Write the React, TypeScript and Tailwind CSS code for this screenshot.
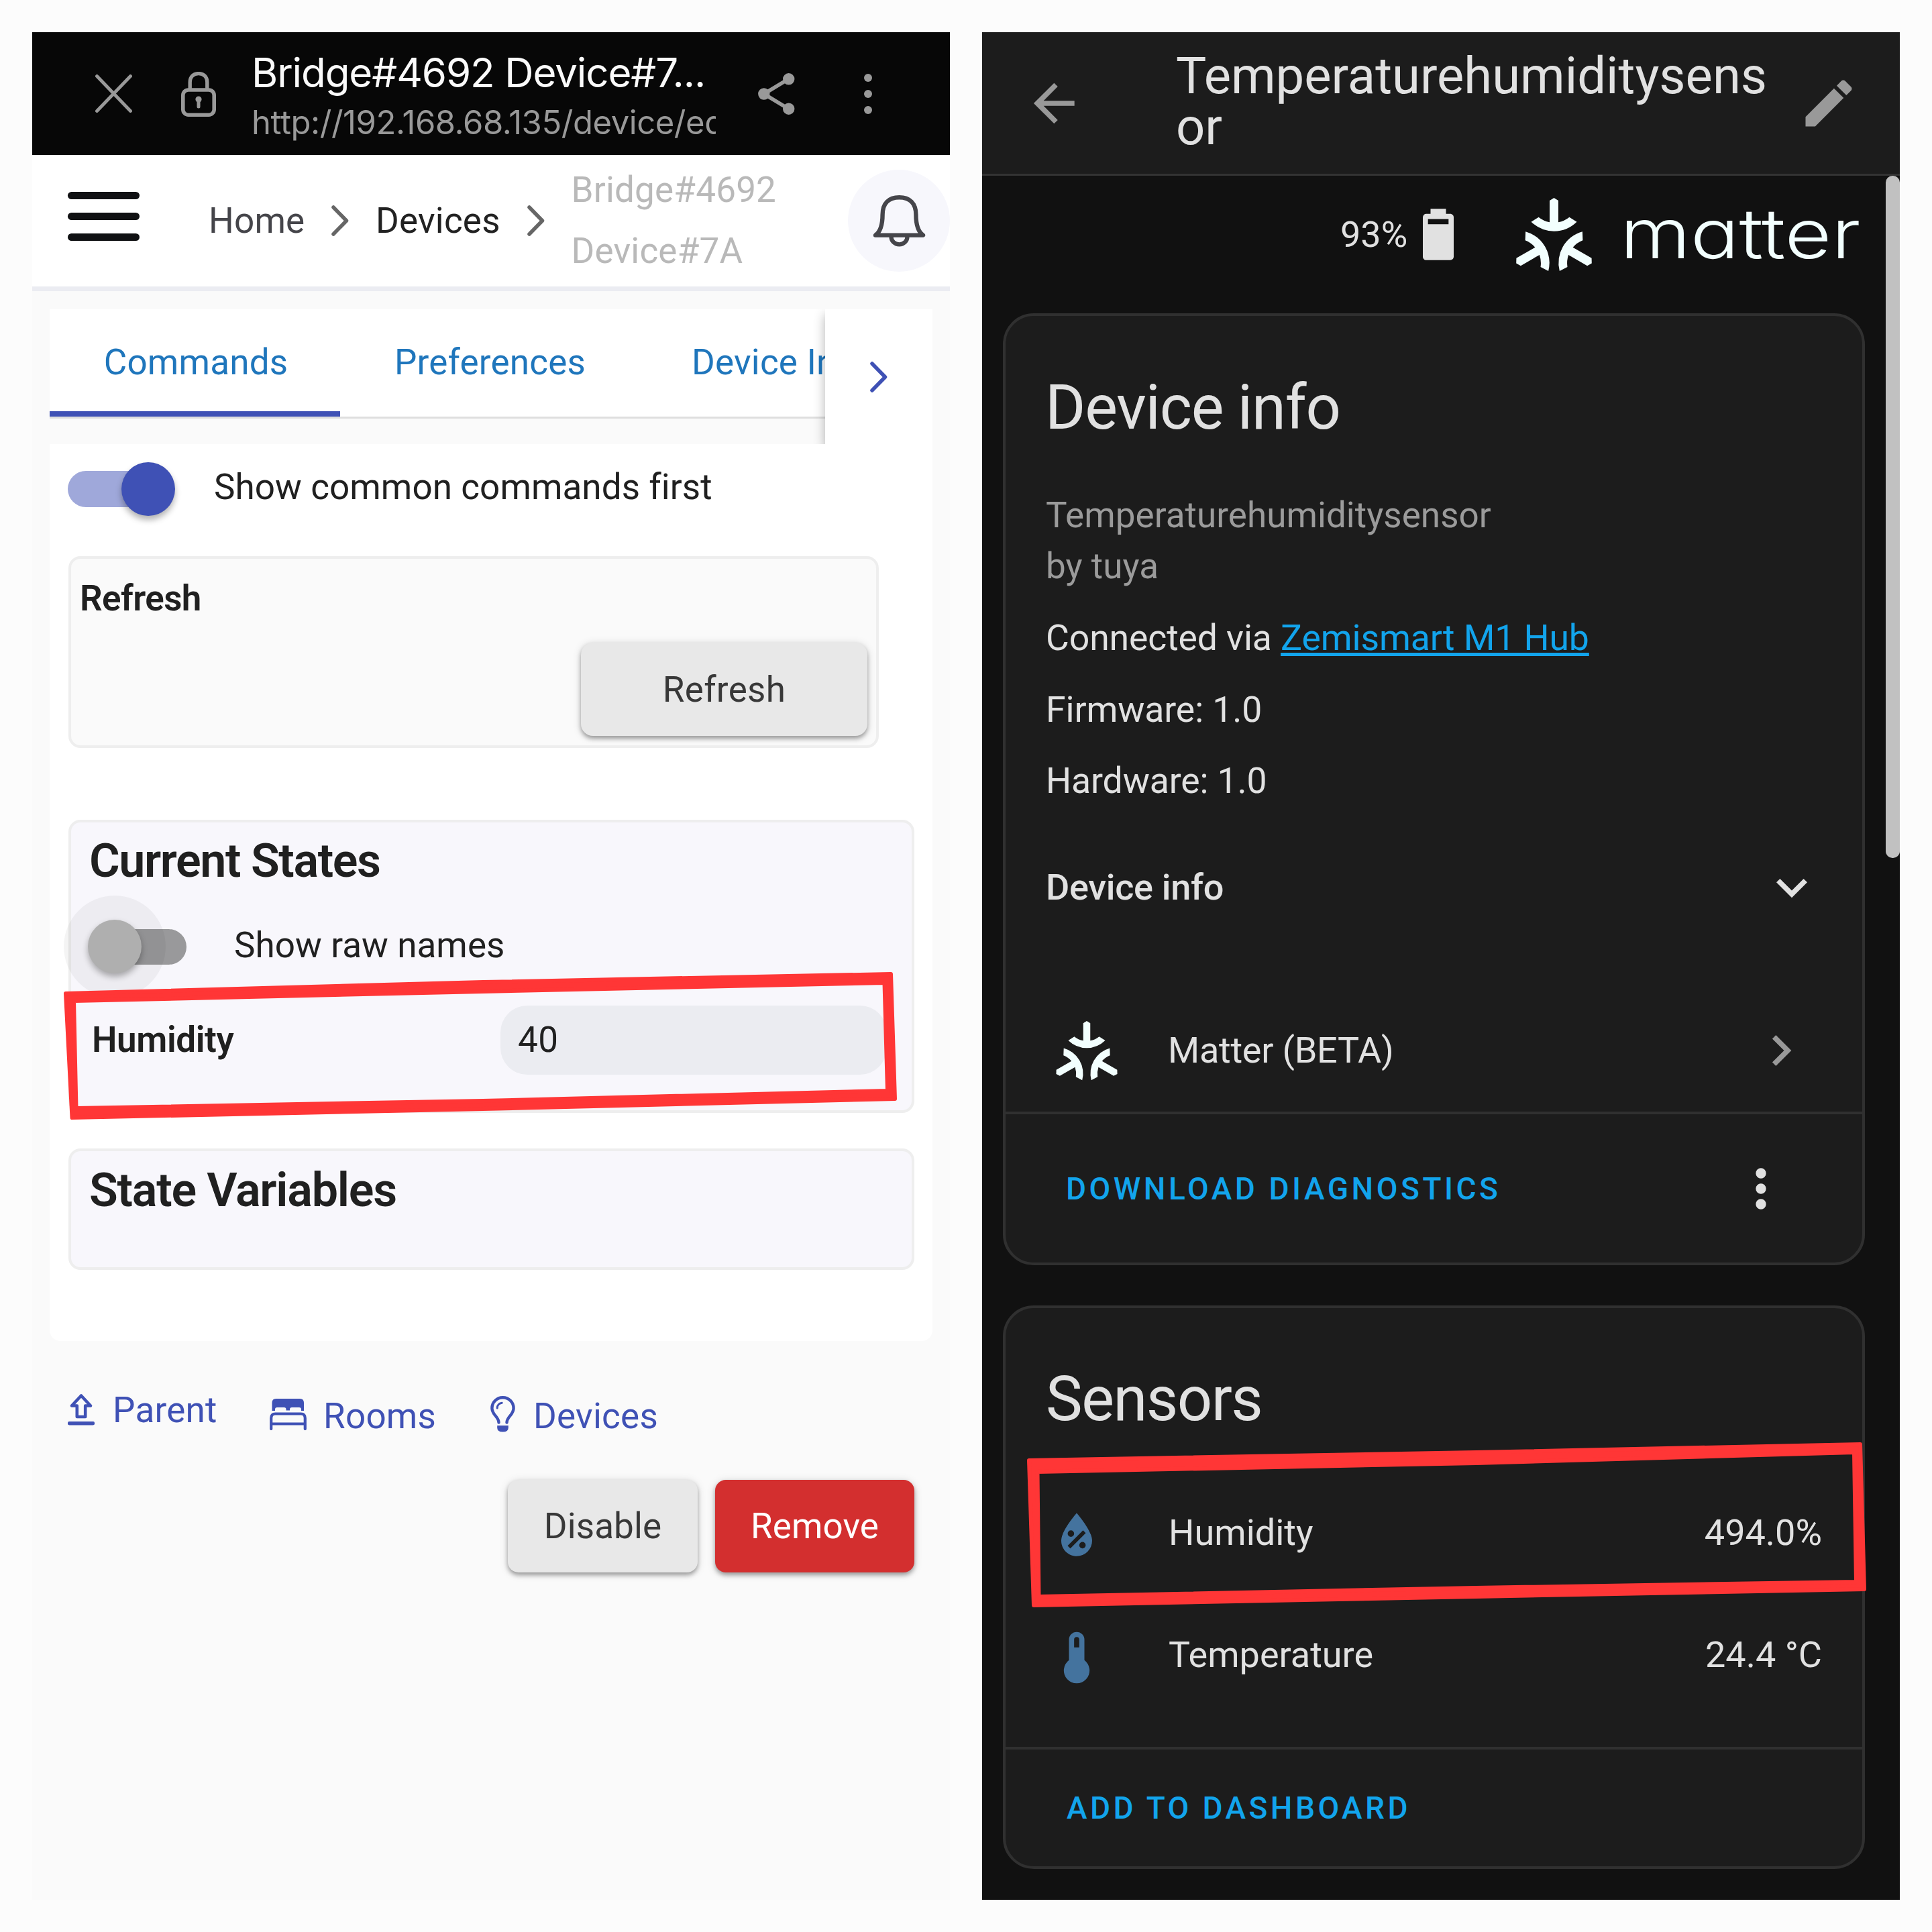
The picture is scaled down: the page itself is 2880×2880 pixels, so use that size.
import React from "react";

/* ---------- icons ---------- */

type MdiProps = { d: string; className?: string; viewBox?: string };

function Mdi({ d, className = "", viewBox = "0 0 24 24" }: MdiProps) {
  return (
    <svg viewBox={viewBox} className={`shrink-0 fill-current ${className}`}>
      <path d={d} />
    </svg>
  );
}

const ARROW_LEFT = "M20,11V13H8L13.5,18.5L12.08,19.92L4.16,12L12.08,4.08L13.5,5.5L8,11H20Z";
const PENCIL =
  "M20.71,7.04C21.1,6.65 21.1,6 20.71,5.63L18.37,3.29C18,2.9 17.35,2.9 16.96,3.29L15.12,5.12L18.87,8.87M3,17.25V21H6.75L17.81,9.93L14.06,6.18L3,17.25Z";
const BATTERY_90 =
  "M16,8H8V6H16M16.67,4H15V2H9V4H7.33A1.33,1.33 0 0,0 6,5.33V20.67C6,21.4 6.6,22 7.33,22H16.67A1.33,1.33 0 0,0 18,20.67V5.33C18,4.6 17.4,4 16.67,4Z";
const CHEVRON_DOWN = "M7.41,8.58L12,13.17L16.59,8.58L18,10L12,16L6,10L7.41,8.58Z";
const CHEVRON_RIGHT = "M8.59,16.58L13.17,12L8.59,7.41L10,6L16,12L10,18L8.59,16.58Z";
const DOTS_VERTICAL =
  "M12,16A2,2 0 0,1 14,18A2,2 0 0,1 12,20A2,2 0 0,1 10,18A2,2 0 0,1 12,16M12,10A2,2 0 0,1 14,12A2,2 0 0,1 12,14A2,2 0 0,1 10,12A2,2 0 0,1 12,10M12,4A2,2 0 0,1 14,6A2,2 0 0,1 12,8A2,2 0 0,1 10,6A2,2 0 0,1 12,4Z";
const WATER_PERCENT =
  "M12,3.25C12,3.25 6,10 6,14C6,17.32 8.69,20 12,20A6,6 0 0,0 18,14C18,10 12,3.25 12,3.25M14.47,9.97L15.53,11.03L9.53,17.03L8.47,15.97M9.75,10A1.25,1.25 0 0,1 11,11.25A1.25,1.25 0 0,1 9.75,12.5A1.25,1.25 0 0,1 8.5,11.25A1.25,1.25 0 0,1 9.75,10M14.25,14.5A1.25,1.25 0 0,1 15.5,15.75A1.25,1.25 0 0,1 14.25,17A1.25,1.25 0 0,1 13,15.75A1.25,1.25 0 0,1 14.25,14.5Z";
const THERMOMETER =
  "M15 13V5A3 3 0 0 0 9 5V13A5 5 0 1 0 15 13M12 4A1 1 0 0 1 13 5V8H11V5A1 1 0 0 1 12 4Z";

function MatterMark({ className = "" }: { className?: string }) {
  const arm =
    "M49.8 4 L56.3 0 L62.8 4 V36.3 Q72 34.5 79.2 28.7 L90.3 35.7 Q76 49.5 56.3 49.7 Q36.6 49.5 22.3 35.7 L33.4 28.7 Q40.6 34.5 49.8 36.3 Z";
  return (
    <svg viewBox="0 0 112.6 110" className={`shrink-0 fill-[#f2fffe] ${className}`}>
      <path d={arm} />
      <path d={arm} transform="rotate(120 56.3 65)" />
      <path d={arm} transform="rotate(240 56.3 65)" />
    </svg>
  );
}

function ThinChevron({ className = "" }: { className?: string }) {
  return (
    <svg viewBox="0 0 26 46" fill="none" className={`shrink-0 stroke-current ${className}`}>
      <path d="M3 3 L22.5 23 L3 43" strokeWidth="5.5" strokeLinecap="round" strokeLinejoin="round" />
    </svg>
  );
}

/* ---------- left phone ---------- */

function BrowserBar() {
  return (
    <div className="flex h-[183px] items-start bg-[#070707] pl-[94px]">
      <svg viewBox="0 0 55 57" fill="none" className="mt-[63px] h-[57px] w-[55px] shrink-0 stroke-[#999]">
        <path d="M2.5 2.5 L52.5 54.5 M52.5 2.5 L2.5 54.5" strokeWidth="4.8" strokeLinecap="round" />
      </svg>
      <svg viewBox="0 0 52 67" fill="none" className="mt-[59px] ml-[73px] h-[67px] w-[52px] shrink-0 stroke-[#999]">
        <path d="M13.2 26 V15.5 C13.2 7.5 18.5 2.6 26 2.6 C33.5 2.6 38.8 7.5 38.8 15.5 V26" strokeWidth="5.4" />
        <rect x="2.8" y="27" width="46.4" height="37.2" rx="8" strokeWidth="5.6" />
        <circle cx="26" cy="41" r="4.6" className="fill-[#999]" stroke="none" />
        <path d="M26 41 V52" strokeWidth="5" strokeLinecap="round" />
      </svg>
      <div className="mt-[25px] ml-[53px] w-[692px] overflow-hidden font-['Inter',sans-serif] whitespace-nowrap">
        <div className="text-[60px] leading-[70px] tracking-[-1.1px] text-[#fafafa]">Bridge#4692 Device#7...</div>
        <div className="mt-[10px] text-[49px] leading-[60px] tracking-[-0.45px] text-[#999]">
          http://192.168.68.135/device/edit
        </div>
      </div>
      <svg viewBox="0 0 55 62" className="mt-[61px] ml-[63px] h-[62px] w-[55px] shrink-0 fill-[#999] stroke-[#999]">
        <path d="M45.7 8.7 L8.7 31 L45.7 53.3" fill="none" strokeWidth="5.6" />
        <circle cx="45.7" cy="8.8" r="8.7" stroke="none" />
        <circle cx="8.8" cy="31" r="8.7" stroke="none" />
        <circle cx="45.7" cy="53.2" r="8.7" stroke="none" />
      </svg>
      <div className="mt-[62px] ml-[103px] flex flex-col gap-[12px]">
        <div className="size-[12px] rounded-full bg-[#999]" />
        <div className="size-[12px] rounded-full bg-[#999]" />
        <div className="size-[12px] rounded-full bg-[#999]" />
      </div>
    </div>
  );
}

function BreadcrumbHeader() {
  return (
    <div className="flex h-[203px] items-center border-b-[7px] border-[#ebecf2] bg-white pl-[53px] text-[53px] leading-[91px] tracking-[0.2px]">
      <div className="mb-[13px] flex w-[107px] flex-col gap-[20px]">
        <div className="h-[11px] rounded-full bg-[#101113]" />
        <div className="h-[11px] rounded-full bg-[#101113]" />
        <div className="h-[11px] rounded-full bg-[#101113]" />
      </div>
      <div className="ml-[103px] w-[146px] text-[#45454a]">Home</div>
      <ThinChevron className="ml-[37px] h-[46px] w-[26px] text-[#666]" />
      <div className="ml-[40px] w-[186px] text-[#222]">Devices</div>
      <ThinChevron className="ml-[40px] h-[46px] w-[26px] text-[#666]" />
      <div className="ml-[39.5px] w-[310px] text-[#b9b9b9]">
        Bridge#4692
        <br />
        Device#7A
      </div>
      <div className="ml-[102.5px] flex size-[152px] items-center justify-center rounded-full bg-[#f7f7fc]">
        <svg viewBox="0 0 79 77" fill="none" className="h-[77px] w-[79px] stroke-[#45454a]">
          <path
            d="M4 59.6 C12.5 53.5 14.6 42 14.6 29 C14.6 12 24 3.3 39.5 3.3 C55 3.3 64.4 12 64.4 29 C64.4 42 66.5 53.5 75 59.6 Z"
            strokeWidth="6.4"
            strokeLinejoin="round"
          />
          <path d="M27.5 62 A12 11.4 0 0 0 51.5 62" strokeWidth="6.2" />
        </svg>
      </div>
    </div>
  );
}

function TabBar() {
  return (
    <div className="mx-[26px] mt-[27px] flex h-[201px]">
      <div className="w-[1156px] overflow-hidden">
        <div className="flex h-[163px] items-stretch border-b-[3px] border-[#dedede] bg-white text-[53px] tracking-[0.2px] whitespace-nowrap text-[#1f76bc]">
          <div className="flex w-[433px] shrink-0 items-center justify-center border-b-[8px] border-[#3f51b5] pt-[8px] pl-[3px]">
            Commands
          </div>
          <div className="flex w-[447px] shrink-0 items-center justify-center">Preferences</div>
          <div className="flex shrink-0 items-center pl-[77px]">Device Info</div>
        </div>
      </div>
      <div className="relative flex w-[160px] items-center justify-center bg-white text-[#3f51b5] shadow-[0_8px_16px_rgba(0,0,0,0.3)] [clip-path:inset(0_0_0_-24px)]">
        <ThinChevron className="h-[46px] w-[26px]" />
      </div>
    </div>
  );
}

function CommandsCard() {
  return (
    <div className="relative mx-[26px] flex h-[1337px] flex-col rounded-b-[16px] bg-white px-[28px] text-[#202020]">
      <div className="flex h-[133px] items-center">
        <div className="relative -ml-px flex h-[54px] w-[139px] items-center rounded-full bg-[#9fa8da]">
          <div className="absolute -right-[21px] size-[80px] rounded-full bg-[#3f51b5] shadow-[0_6px_10px_rgba(0,0,0,0.3)]" />
        </div>
        <div className="mb-[3px] ml-[79px] text-[53px] tracking-[0.07px]">Show common commands first</div>
      </div>

      <div className="mt-[34px] flex h-[286px] w-[1208px] flex-col rounded-[18px] border-[4px] border-[#eee] bg-[#fafafa]">
        <div className="mt-[29px] ml-[13px] text-[53px] leading-[60px] font-semibold tracking-[-0.6px]">Refresh</div>
        <button className="mt-[36px] mr-[13px] flex h-[139px] w-[427px] items-center justify-center self-end rounded-[18px] bg-[#e8e8e8] pt-[2px] text-[53px] tracking-[0.3px] text-[#383838] shadow-[0_4px_6px_rgba(0,0,0,0.32),0_2px_14px_rgba(0,0,0,0.14)]">
          Refresh
        </button>
      </div>

      <div className="mt-[107px] flex h-[437px] w-[1261px] flex-col rounded-[18px] border-[4px] border-[#eee] bg-[#f8f7fc] pl-[28px]">
        <div className="mt-[15px] -ml-px text-[70px] leading-[84px] font-semibold tracking-[-1.4px]">Current States</div>
        <div className="mt-[26px] flex h-[120px] items-center">
          <div className="relative ml-[4px] flex h-[53px] w-[140px] items-center rounded-full bg-[#99999b]">
            <div className="absolute -left-[43px] size-[152px] rounded-full bg-black/[0.045]" />
            <div className="absolute -left-[7px] size-[80px] rounded-full bg-[#afafaf] shadow-[0_5px_10px_rgba(0,0,0,0.3)]" />
          </div>
          <div className="mb-[3px] ml-[71px] text-[53px] tracking-[0.06px]">Show raw names</div>
        </div>
        <div className="mt-[28px] flex h-[103px] items-center">
          <div className="w-[612px] pl-[3px] text-[53px] font-semibold tracking-[-0.4px]">Humidity</div>
          <div className="flex h-[103px] w-[576px] items-center rounded-[40px] bg-[#ebecf1] pl-[26px] text-[53px] tracking-[0.5px]">
            40
          </div>
        </div>
      </div>

      <div className="mt-[53px] h-[181px] w-[1261px] rounded-[18px] border-[4px] border-[#eee] bg-[#f8f7fc] pt-[16px] pl-[27px] text-[70px] leading-[84px] font-semibold tracking-[-1.2px]">
        State Variables
      </div>
    </div>
  );
}

function FooterLinks() {
  return (
    <div className="mt-[66px] flex items-start pl-[53px] text-[53px] leading-[72px] tracking-[0.25px] text-[#3f51b5]">
      <div className="flex h-[72px] items-center">
        <svg viewBox="0 0 40 48" fill="none" className="h-[48px] w-[40px] stroke-current">
          <path d="M20 3.5 L34 18.5 H26.2 V35 H13.8 V18.5 H6 Z" strokeWidth="4.6" strokeLinejoin="round" />
          <path d="M2.5 44.8 H37.5" strokeWidth="5.4" strokeLinecap="round" />
        </svg>
        <div className="mt-[2px] ml-[27px] w-[157px]">Parent</div>
      </div>
      <div className="mt-[9px] ml-[77px] flex h-[72px] items-center">
        <svg viewBox="0 0 55 47" className="mb-[3px] h-[47px] w-[55px] fill-current stroke-current">
          <path
            stroke="none"
            d="M3.5 18 V6 Q3.5 0 9.5 0 H45 Q51 0 51 6 V18 H47 V16 Q47 13 44 13 H33 Q30 13 30 16 V17.5 H24.5 V16 Q24.5 13 21.5 13 H11 Q8 13 8 16 V18 Z"
          />
          <path
            fill="none"
            strokeWidth="4.2"
            strokeLinecap="round"
            strokeLinejoin="round"
            d="M2.2 45 V29 Q2.2 22.5 8.5 22.5 H46.5 Q52.8 22.5 52.8 29 V45 M2.2 37.5 H52.8"
          />
        </svg>
        <div className="mt-[2px] ml-[25px] w-[170px]">Rooms</div>
      </div>
      <div className="mt-[9px] ml-[79px] flex h-[72px] items-center">
        <svg viewBox="0 0 37 54" fill="none" className="mb-[4px] h-[54px] w-[37px] stroke-current">
          <path
            d="M12.5 39.5 C12.5 31 2.4 28 2.4 18.2 C2.4 9 9.6 2.3 18.5 2.3 C27.4 2.3 34.6 9 34.6 18.2 C34.6 28 24.5 31 24.5 39.5"
            strokeWidth="4.4"
            strokeLinecap="round"
          />
          <path d="M10.2 18 C10.2 13.8 13 10.8 17.2 10.2" strokeWidth="3" strokeLinecap="round" />
          <path d="M10.2 44 H26.8 V47.5 Q26.8 53.6 18.5 53.6 Q10.2 53.6 10.2 47.5 Z" stroke="none" className="fill-current" />
        </svg>
        <div className="mt-[2px] ml-[27px]">Devices</div>
      </div>
    </div>
  );
}

function LeftPhone() {
  return (
    <section className="flex h-[2784px] w-[1368px] flex-col overflow-hidden bg-[#fafafa]">
      <BrowserBar />
      <BreadcrumbHeader />
      <TabBar />
      <CommandsCard />
      <FooterLinks />
      <div className="mt-[60px] flex h-[138px] justify-end gap-[26px] pr-[53px] text-[53px] tracking-[0.1px]">
        <button className="w-[283px] rounded-[16px] bg-[#e8e8e8] pt-[2px] text-[#383838] shadow-[0_4px_6px_rgba(0,0,0,0.32),0_2px_14px_rgba(0,0,0,0.14)]">
          Disable
        </button>
        <button className="w-[297px] rounded-[16px] bg-[#d32f2f] pt-[2px] text-white shadow-[0_4px_6px_rgba(0,0,0,0.32),0_2px_14px_rgba(0,0,0,0.14)]">
          Remove
        </button>
      </div>
    </section>
  );
}

/* ---------- right phone ---------- */

function SensorRow({ icon, name, value }: { icon: string; name: string; value: string }) {
  return (
    <div className="flex h-[182px] items-center pr-[60px] pl-[60px] text-[54px] text-[#e1e1e1]">
      <Mdi d={icon} className="mt-[9px] size-[92px] text-[#44739e]" />
      <div className="ml-[91px] flex-1">{name}</div>
      <div>{value}</div>
    </div>
  );
}

function DeviceInfoCard() {
  return (
    <div className="mt-[30px] ml-[31px] flex h-[1419px] w-[1285px] flex-col rounded-[46px] border-[4px] border-[#303030] bg-[#1c1c1c] text-[54px] leading-[76px] text-[#e1e1e1]">
      <div className="mt-[82px] pl-[59px] text-[92px] leading-[110px] tracking-[-1.2px]">Device info</div>
      <div className="mt-[67px] pl-[60px] text-[53px] tracking-[0.05px] text-[#9b9b9b]">
        Temperaturehumiditysensor
        <br />
        by tuya
      </div>
      <div className="mt-[31px] flex flex-col gap-[30.5px] pl-[60px] text-[53.5px] tracking-[-0.1px]">
        <div>
          Connected via{" "}
          <span className="text-[#12a4ec] underline decoration-[5px] underline-offset-[4px]">Zemismart M1 Hub</span>
        </div>
        <div>Firmware: 1.0</div>
        <div>Hardware: 1.0</div>
      </div>
      <div className="mt-[83px] flex h-[76px] items-center justify-between pr-[59px] pl-[60px] font-medium tracking-[-0.3px]">
        Device info
        <Mdi d={CHEVRON_DOWN} className="size-[92px]" />
      </div>
      <div className="mt-[159px] flex h-[92px] items-center pr-[75px] pl-[75px]">
        <MatterMark className="h-[89px] w-[92px]" />
        <div className="ml-[75px] flex-1 tracking-[-0.25px]">Matter (BETA)</div>
        <Mdi d={CHEVRON_RIGHT} className="size-[92px] text-[#999]" />
      </div>
      <div className="mt-[45px] flex flex-1 items-center justify-between border-t-[4px] border-[#303030] pr-[105px] pl-[90px]">
        <div className="text-[46px] font-medium tracking-[4.55px] text-[#12a4ec]">DOWNLOAD DIAGNOSTICS</div>
        <Mdi d={DOTS_VERTICAL} className="size-[92px]" />
      </div>
    </div>
  );
}

function SensorsCard() {
  return (
    <div className="mt-[60px] ml-[31px] flex h-[840px] w-[1285px] flex-col rounded-[46px] border-[4px] border-[#303030] bg-[#1c1c1c] text-[#e1e1e1]">
      <div className="mt-[81px] pl-[60px] text-[92px] leading-[110px] tracking-[-1.5px]">Sensors</div>
      <div className="mt-[52px]">
        <SensorRow icon={WATER_PERCENT} name="Humidity" value="494.0%" />
        <SensorRow icon={THERMOMETER} name="Temperature" value="24.4 °C" />
      </div>
      <div className="mt-[47px] flex flex-1 items-center border-t-[4px] border-[#303030] pl-[91px] text-[46px] font-medium tracking-[4.45px] text-[#12a4ec]">
        ADD TO DASHBOARD
      </div>
    </div>
  );
}

function RightPhone() {
  return (
    <section className="relative flex h-[2784px] w-[1368px] flex-col overflow-hidden bg-[#111]">
      <header className="flex h-[214px] items-center border-b-[3px] border-[#333] bg-[#1c1c1c] pl-[61px]">
        <Mdi d={ARROW_LEFT} className="size-[92px] text-[#999]" />
        <h1 className="mb-[5px] ml-[136px] w-[887px] text-[76px] leading-[76px] break-all text-[#e1e1e1]">
          Temperaturehumiditysensor
        </h1>
        <Mdi d={PENCIL} className="ml-[40px] size-[92px] text-[#999]" />
      </header>

      <div className="flex h-[175px] shrink-0 items-center pl-[534px]">
        <div className="w-[104px] text-[54px] text-[#e1e1e1]">93%</div>
        <Mdi d={BATTERY_90} viewBox="6 2 12 20" className="ml-[19px] h-[77px] w-[46px] text-[#e1e1e1]" />
        <MatterMark className="ml-[93px] h-[110px] w-[113px]" />
        <div className="mb-[3px] ml-[42px] origin-left scale-x-[1.18] text-[102px] leading-[120px] font-light text-[#f2fffe] font-['Inter',sans-serif] [font-feature-settings:'cv11']">
          matter
        </div>
      </div>

      <DeviceInfoCard />
      <SensorsCard />

      <div className="absolute top-[214px] right-0 h-[1017px] w-[21px] rounded-[10px] bg-[#c1c1c1]" />
    </section>
  );
}

/* Hand-drawn red frames over the humidity readings */
function Annotations() {
  return (
    <svg
      viewBox="0 0 2880 2880"
      className="pointer-events-none absolute inset-0 size-[2880px] fill-[#ff3636] stroke-[#ff3636]"
      strokeWidth="6"
      strokeLinejoin="round"
      fillRule="evenodd"
    >
      <path d="M98 1481 L720 1464 L1328 1452 L1334 1638 L720 1653 L107.5 1666 Z M110 1492 L720 1478 L1318.5 1465 L1323 1626 L720 1641 L113.5 1652 Z" />
      <path d="M1534 2177 L2200 2165 L2773 2153 L2779 2369 L2200 2380 L1541 2393 Z M1546.5 2194 L2200 2181 L2764 2165 L2767 2358 L2200 2367 L1548.5 2380 Z" />
    </svg>
  );
}

export default function App() {
  return (
    <main className="relative flex size-[2880px] gap-12 overflow-hidden bg-[#fcfcfc] p-12 font-['Roboto',sans-serif]">
      <LeftPhone />
      <RightPhone />
      <Annotations />
    </main>
  );
}
